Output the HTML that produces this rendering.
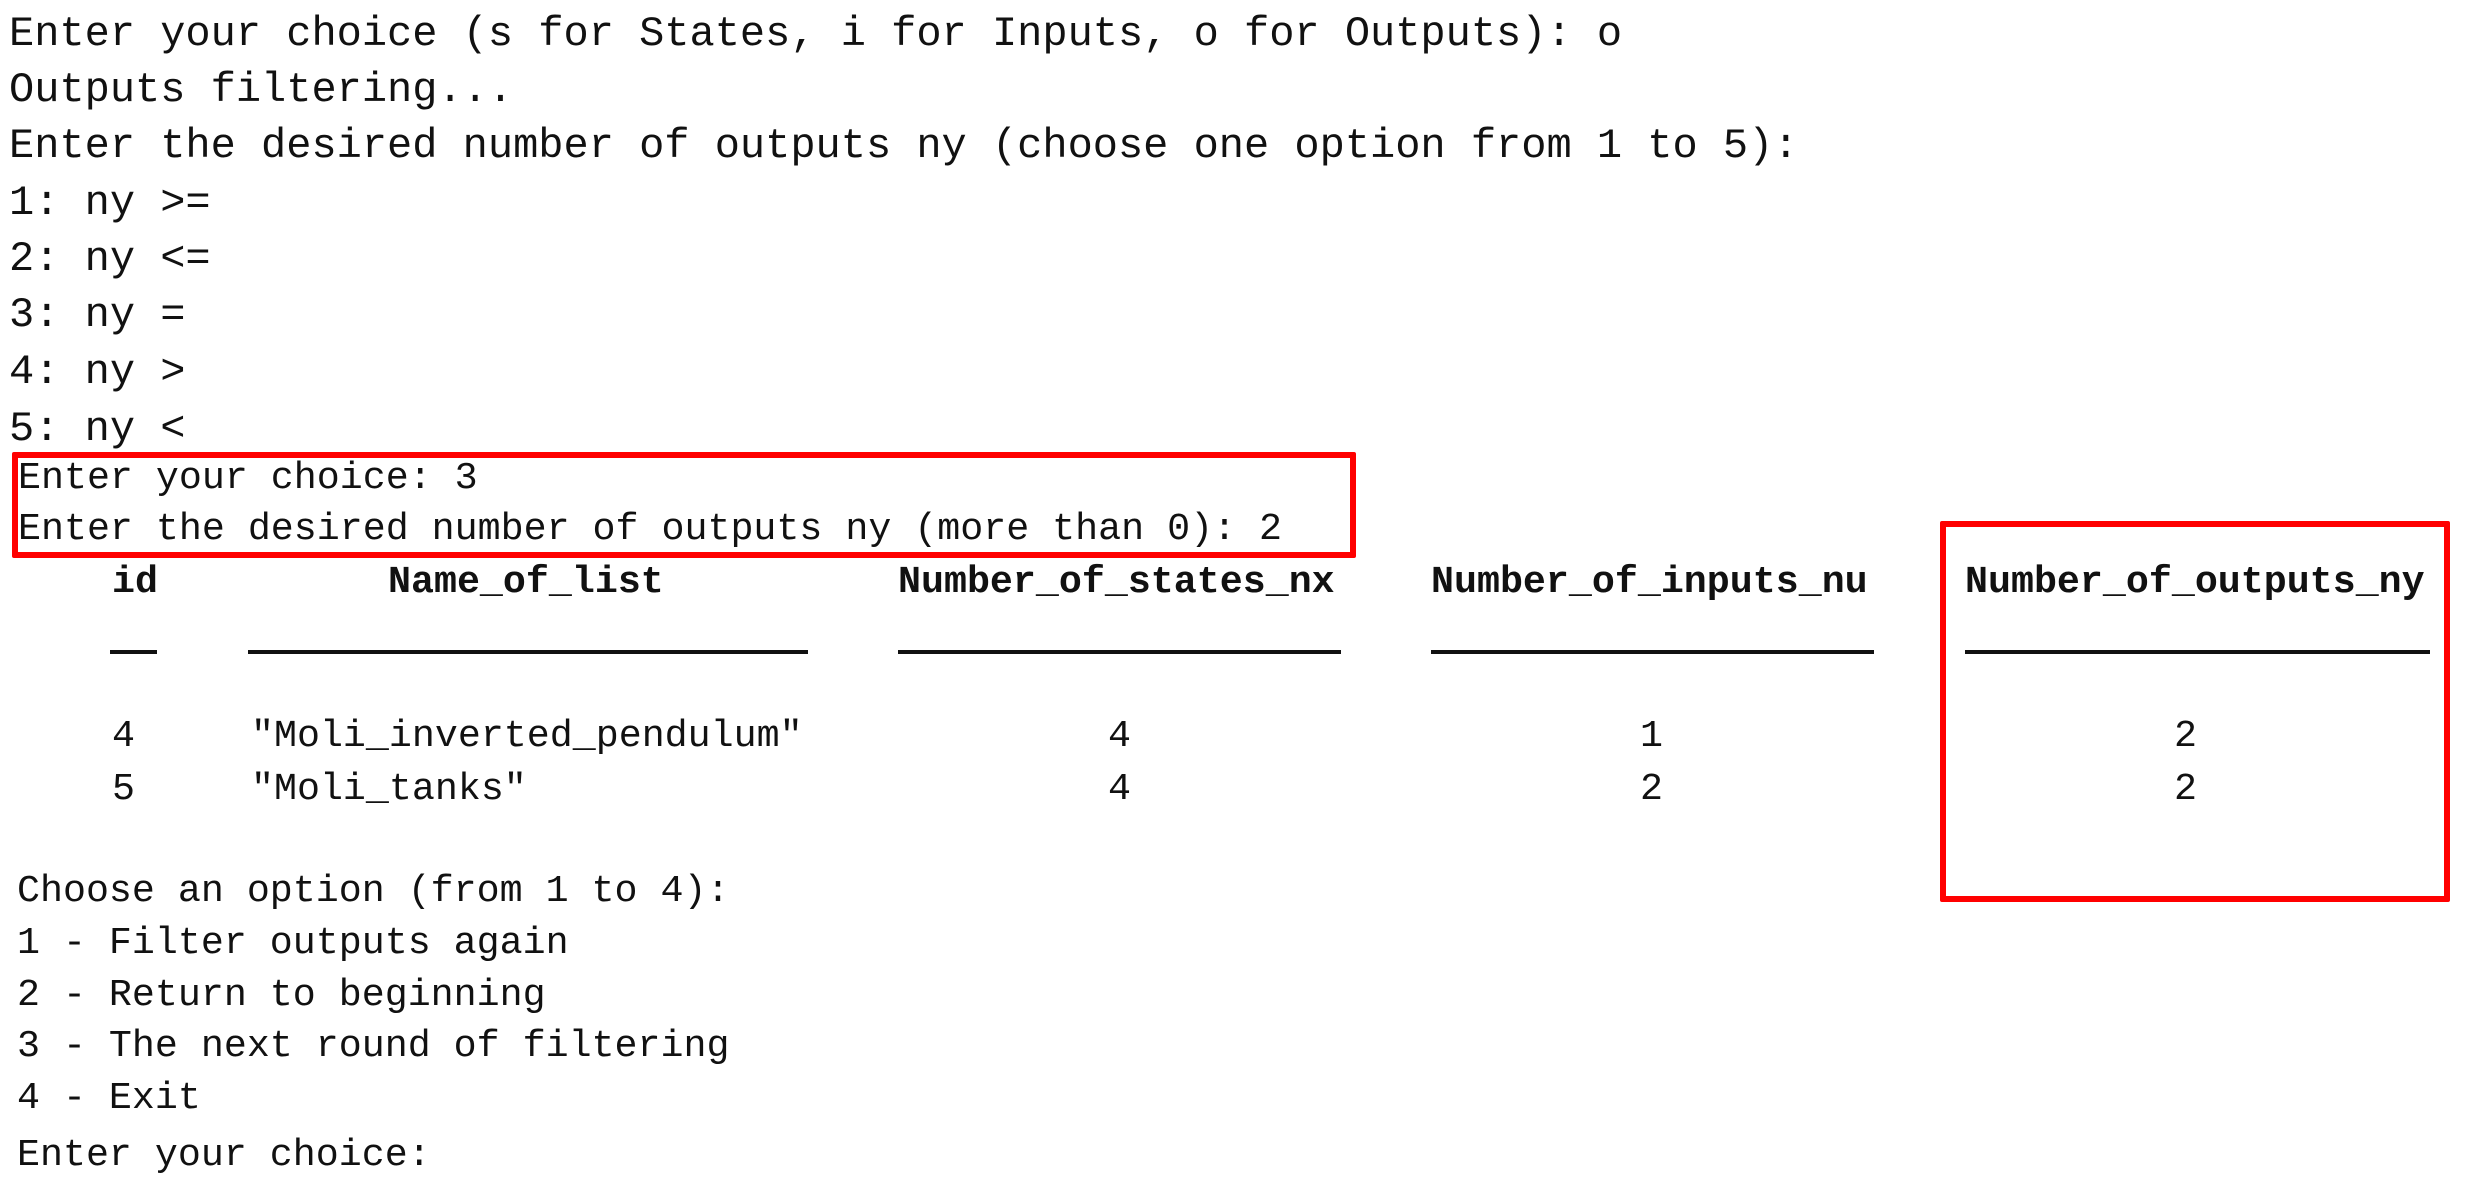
<!DOCTYPE html>
<html><head><meta charset="utf-8"><style>
html,body{margin:0;padding:0;background:#fff;width:2465px;height:1190px;overflow:hidden;position:relative}
.t{position:absolute;white-space:pre;font-family:"Liberation Mono","Courier New",monospace;color:#111;line-height:50px;height:50px}
.a{font-size:42px;left:9px}
.b{font-size:38.3px}
.h{font-weight:bold}
.u{position:absolute;height:4px;background:#111}
.box{position:absolute;border:6px solid #f00;box-sizing:border-box;border-radius:2px}
</style></head><body>
<div class="t a" style="top:9px">Enter your choice (s for States, i for Inputs, o for Outputs): o</div>
<div class="t a" style="top:65px">Outputs filtering...</div>
<div class="t a" style="top:121px">Enter the desired number of outputs ny (choose one option from 1 to 5):</div>
<div class="t a" style="top:178px">1: ny &gt;=</div>
<div class="t a" style="top:234px">2: ny &lt;=</div>
<div class="t a" style="top:290px">3: ny =</div>
<div class="t a" style="top:347px">4: ny &gt;</div>
<div class="t a" style="top:404px">5: ny &lt;</div>

<div class="box" style="left:12px;top:452px;width:1344px;height:106px"></div>
<div class="t b" style="left:18px;top:453px">Enter your choice: 3</div>
<div class="t b" style="left:18px;top:504px">Enter the desired number of outputs ny (more than 0): 2</div>

<div class="t b h" style="left:112px;top:557px">id</div>
<div class="t b h" style="left:388px;top:557px">Name_of_list</div>
<div class="t b h" style="left:898px;top:557px">Number_of_states_nx</div>
<div class="t b h" style="left:1431px;top:557px">Number_of_inputs_nu</div>
<div class="t b h" style="left:1965px;top:557px">Number_of_outputs_ny</div>

<div class="u" style="left:110px;width:47px;top:650px"></div>
<div class="u" style="left:248px;width:560px;top:650px"></div>
<div class="u" style="left:898px;width:443px;top:650px"></div>
<div class="u" style="left:1431px;width:443px;top:650px"></div>
<div class="u" style="left:1965px;width:465px;top:650px"></div>

<div class="t b" style="left:112px;top:711px">4</div>
<div class="t b" style="left:251px;top:711px">"Moli_inverted_pendulum"</div>
<div class="t b" style="left:1108px;top:711px">4</div>
<div class="t b" style="left:1640px;top:711px">1</div>
<div class="t b" style="left:2174px;top:711px">2</div>
<div class="t b" style="left:112px;top:764px">5</div>
<div class="t b" style="left:251px;top:764px">"Moli_tanks"</div>
<div class="t b" style="left:1108px;top:764px">4</div>
<div class="t b" style="left:1640px;top:764px">2</div>
<div class="t b" style="left:2174px;top:764px">2</div>

<div class="box" style="left:1940px;top:521px;width:510px;height:381px"></div>

<div class="t b" style="left:17px;top:866px">Choose an option (from 1 to 4):</div>
<div class="t b" style="left:17px;top:918px">1 - Filter outputs again</div>
<div class="t b" style="left:17px;top:970px">2 - Return to beginning</div>
<div class="t b" style="left:17px;top:1021px">3 - The next round of filtering</div>
<div class="t b" style="left:17px;top:1073px">4 - Exit</div>
<div class="t b" style="left:17px;top:1130px">Enter your choice:</div>
</body></html>
